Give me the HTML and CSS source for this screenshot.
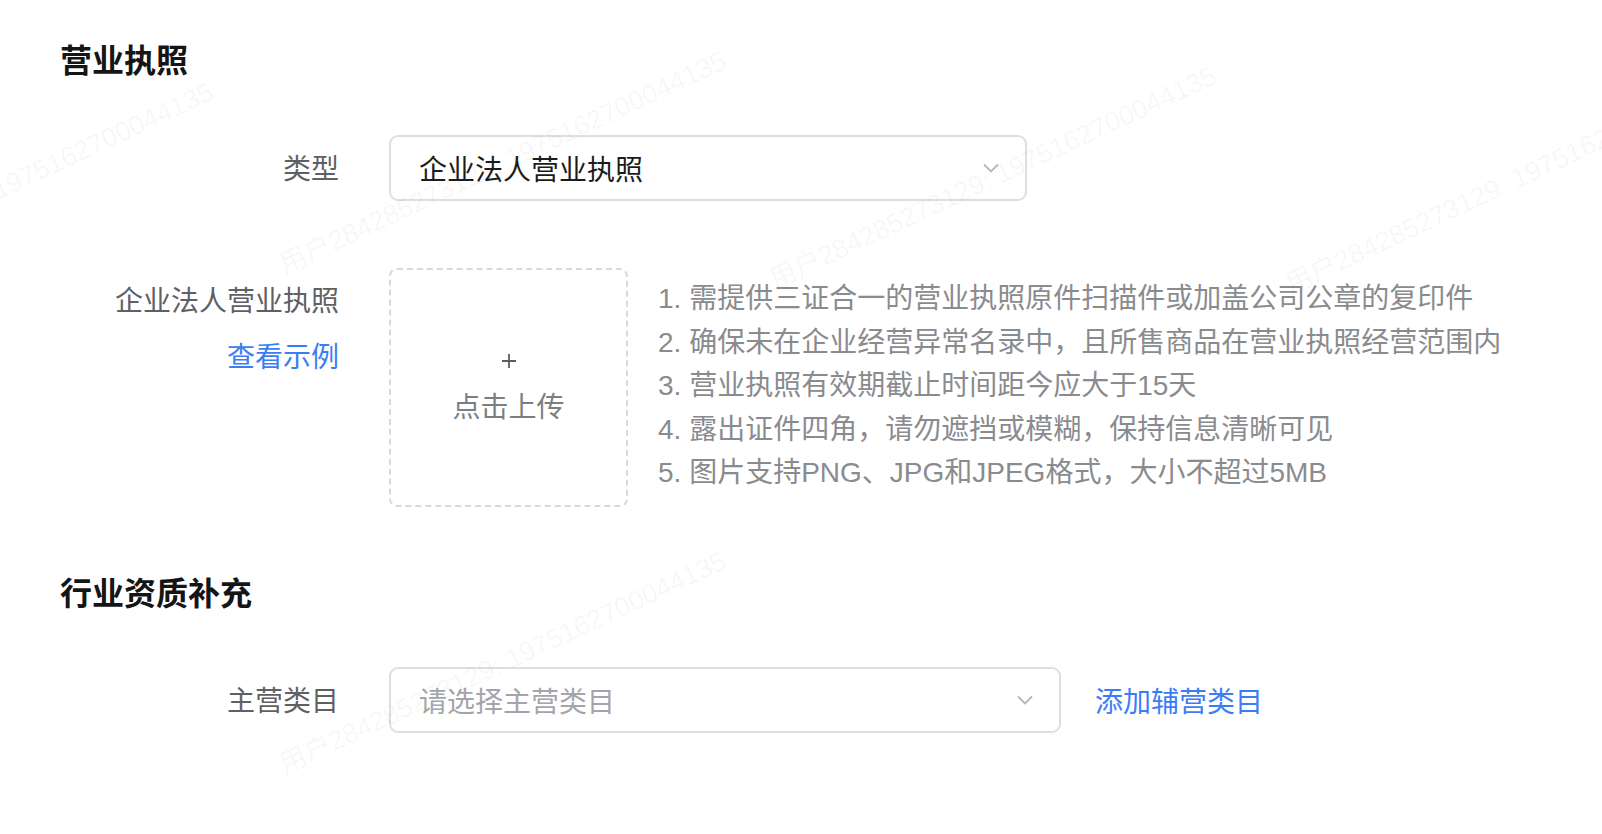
FILE: index.html
```html
<!DOCTYPE html>
<html lang="zh-CN">
<head>
    <meta charset="UTF-8">
    <meta name="viewport" content="width=device-width, initial-scale=1.0">
    <title>资质信息</title>
    <link rel="stylesheet" href="styles.css">
</head>
<body>
    <div class="page">
        <section class="section">
            <h2 class="section-title">营业执照</h2>
            <div class="form-row">
                <div class="form-label">类型</div>
                <div class="select select-type">
                    <span class="select-value">企业法人营业执照</span>
                    <svg class="chevron" width="16" height="10" viewBox="0 0 16 10"><path d="M1 1.5l7 7 7-7" fill="none" stroke="#b4b7bd" stroke-width="1.8"/></svg>
                </div>
            </div>
            <div class="form-row form-row-upload">
                <div class="form-label">
                    <div class="label-text">企业法人营业执照</div>
                    <a href="#" class="link example-link">查看示例</a>
                </div>
                <div class="upload-wrap">
                    <div class="uploader">
                        <svg class="plus" width="16" height="16" viewBox="0 0 16 16"><path d="M8 1v14M1 8h14" stroke="#5c5c5c" stroke-width="1.8"/></svg>
                        <span class="uploader-text">点击上传</span>
                    </div>
                    <ul class="tips">
                        <li>1. 需提供三证合一的营业执照原件扫描件或加盖公司公章的复印件</li>
                        <li>2. 确保未在企业经营异常名录中，且所售商品在营业执照经营范围内</li>
                        <li>3. 营业执照有效期截止时间距今应大于15天</li>
                        <li>4. 露出证件四角，请勿遮挡或模糊，保持信息清晰可见</li>
                        <li>5. 图片支持PNG、JPG和JPEG格式，大小不超过5MB</li>
                    </ul>
                </div>
            </div>
        </section>

        <section class="section section-industry">
            <h2 class="section-title">行业资质补充</h2>
            <div class="form-row">
                <div class="form-label">主营类目</div>
                <div class="select select-category">
                    <span class="select-placeholder">请选择主营类目</span>
                    <svg class="chevron" width="16" height="10" viewBox="0 0 16 10"><path d="M1 1.5l7 7 7-7" fill="none" stroke="#b4b7bd" stroke-width="1.8"/></svg>
                </div>
                <a href="#" class="link add-link">添加辅营类目</a>
            </div>
        </section>

        <!-- watermark layer -->
        <div class="watermark">
            <span class="wm wm-a">用户284285273129: 1975162700044135</span>
            <span class="wm wm-b">用户284285273129: 1975162700044135</span>
            <span class="wm wm-c">用户284285273129: 1975162700044135</span>
            <span class="wm wm-d">用户284285273129: 1975162700044135</span>
            <span class="wm wm-e">用户284285273129: 1975162700044135</span>
        </div>
    </div>
</body>
</html>
```

FILE: styles.css
```css
body {
  margin: 0;
  background-color: #fff;
  font-family: "Liberation Sans", "Noto Sans CJK SC", sans-serif;
}

.page {
  position: relative;
  width: 1602px;
  height: 834px;
  overflow: hidden;
  padding: 39px 0 0 60px;
  box-sizing: border-box;
}

.section-title {
  margin: 0;
  font-size: 32px;
  line-height: 44px;
  font-weight: 700;
  color: #151515;
}

.section-industry {
  margin-top: 65px;
}

.form-row {
  display: flex;
  align-items: center;
  margin-top: 52px;
}

.section-industry .form-row {
  margin-top: 51px;
}

.form-row-upload {
  align-items: flex-start;
  margin-top: 67px;
}

.form-label {
  width: 279px;
  margin-right: 50px;
  padding-top: 4px;
  text-align: right;
  font-size: 28px;
  line-height: 62px;
  color: #5f6064;
  flex-shrink: 0;
}

.form-row-upload .form-label {
  padding-top: 3px;
}

.link {
  color: #3b7df6;
  text-decoration: none;
  font-size: 28px;
}

.example-link {
  display: block;
  line-height: 50px;
}

/* select boxes */
.select {
  display: flex;
  align-items: center;
  justify-content: space-between;
  height: 66px;
  padding: 0 26px 0 28px;
  border: 2px solid #dedede;
  border-radius: 9px;
  box-sizing: border-box;
  font-size: 28px;
}

.select-type {
  width: 638px;
}

.select-category {
  width: 672px;
}

.select-value {
  color: #1c1c1c;
}

.select-placeholder {
  color: #a3a5aa;
}

.chevron {
  display: block;
}

.add-link {
  margin-left: 34px;
}

/* upload */
.upload-wrap {
  display: flex;
  gap: 30px;
}

.uploader {
  width: 239px;
  height: 239px;
  box-sizing: border-box;
  border: 2px dashed #d9d9d9;
  border-radius: 8px;
  display: flex;
  flex-direction: column;
  align-items: center;
  justify-content: center;
  padding-top: 6px;
  gap: 19px;
}

.plus {
  display: block;
}

.uploader-text {
  font-size: 28px;
  line-height: 40px;
  color: #7d7e80;
}

.tips {
  list-style: none;
  margin: 0;
  padding: 9px 0 0;
  font-size: 28px;
  line-height: 43.6px;
  color: #8a8b8e;
  white-space: nowrap;
}

/* watermark */
.watermark {
  position: absolute;
  inset: 0;
  pointer-events: none;
  overflow: hidden;
}

.wm {
  position: absolute;
  font-size: 27px;
  line-height: 30px;
  white-space: nowrap;
  color: rgba(0, 0, 0, 0.045);
  transform-origin: 0 50%;
  transform: rotate(-25deg);
}

.wm-a { left: 281px; top: 251px; }
.wm-b { left: 771px; top: 266px; }
.wm-c { left: 1287px; top: 271px; }
.wm-d { left: -232px; top: 282px; }
.wm-e { left: 281px; top: 751px; }
```
